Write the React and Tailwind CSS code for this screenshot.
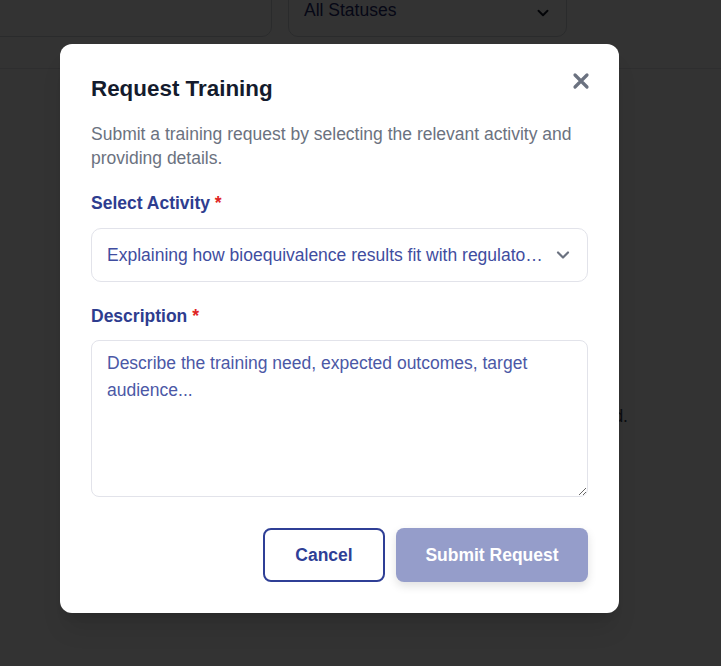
import React from "react";

function Chevron({ className }) {
  return (
    <svg className={className} viewBox="0 0 24 24" fill="none" stroke="currentColor" strokeWidth="2.6" strokeLinecap="round" strokeLinejoin="round">
      <path d="M6 9l6 6 6-6" />
    </svg>
  );
}

export default function App() {
  return (
    <div className="relative h-[666px] w-[721px] overflow-hidden bg-white" style={{ fontFamily: '"Liberation Sans", Arial, sans-serif' }}>
      {/* underlying page */}
      <div className="flex h-[69px] flex-col border-b border-[#e5e7eb]">
        <div className="-mt-[20px] flex gap-[16px] pr-[154px]">
          <div className="h-[57px] flex-1 -ml-[10px] rounded-[10px] border border-[#d1d5db]" />
          <div className="flex h-[57px] w-[279px] items-end justify-between rounded-[10px] border border-[#d1d5db] pb-[13px] pl-[15px] pr-[14px] text-[17.5px] text-[#1e2a6e]">
            <span>All Statuses</span>
            <Chevron className="mb-[1px] h-[18px] w-[18px] text-[#111827]" />
          </div>
        </div>
      </div>
      <div className="flex justify-end pr-[93px] pt-[334px] text-[17.5px] text-[#374151]">
        <span>shown when a request is submitted.</span>
      </div>

      {/* overlay */}
      <div className="absolute inset-0 bg-black/80 pl-[60px] pt-[44px]">
        <div className="w-[559px] rounded-[12px] bg-white px-[31px] pb-[31px] pt-[31px] shadow-xl">
          <div className="flex items-start justify-between">
            <h2 className="text-[22.4px] font-bold leading-[28px] text-[#141b2d]">Request Training</h2>
            <svg className="mr-[-2px] -mt-[3px] h-[18px] w-[18px] text-[#6b7280]" viewBox="0 0 18 18" fill="none" stroke="currentColor" strokeWidth="3.2" strokeLinecap="round">
              <path d="M3 3l12 12M15 3L3 15" />
            </svg>
          </div>
          <p className="mt-[19px] text-[17.5px] leading-[24px] text-[#6b7280]">
            Submit a training request by selecting the relevant activity and providing details.
          </p>

          <label className="mt-[21px] block text-[17.5px] font-bold leading-[24px] text-[#2e3d8f]">
            Select Activity <span className="text-[#e02424]">*</span>
          </label>
          <div className="mt-[13px] flex h-[54px] items-center justify-between rounded-[10px] border border-[#e2e3ea] pl-[15px] pr-[14px]">
            <span className="truncate pr-[10px] text-[17.5px] text-[#3f4da0]">
              Explaining how bioequivalence results fit with regulato…
            </span>
            <Chevron className="h-[20px] w-[20px] shrink-0 text-[#6b7280]" />
          </div>

          <label className="mt-[22px] block text-[17.5px] font-bold leading-[24px] text-[#2e3d8f]">
            Description <span className="text-[#e02424]">*</span>
          </label>
          <textarea
            className="mt-[12px] block h-[157px] w-full resize-y rounded-[8px] border border-[#e2e3ea] px-[15px] py-[9px] text-[17.5px] leading-[27px] text-[#3f4da0] outline-none placeholder:text-[#4b58a6]"
            placeholder="Describe the training need, expected outcomes, target audience..."
          />

          <div className="mt-[31px] flex justify-end gap-[11px]">
            <button className="h-[54px] w-[122px] rounded-[8px] border-2 border-[#2f3f96] text-[17.5px] font-bold text-[#2f3f96]">
              Cancel
            </button>
            <button className="h-[54px] w-[192px] rounded-[8px] bg-[#959dca] text-[17.5px] font-bold text-white shadow-[0_4px_10px_rgba(0,0,0,0.12)]">
              Submit Request
            </button>
          </div>
        </div>
      </div>
    </div>
  );
}
